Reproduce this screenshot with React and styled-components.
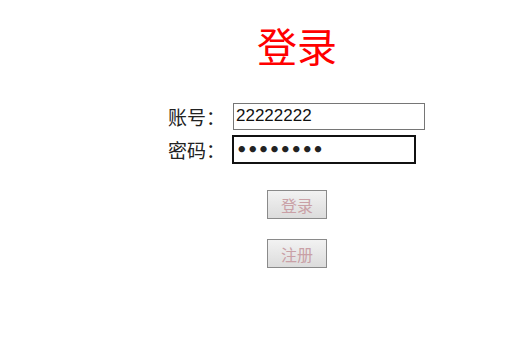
import React from "react";
import styled, { createGlobalStyle } from "styled-components";

const GlobalStyle = createGlobalStyle`
  html, body {
    margin: 0;
    padding: 0;
    background: #ffffff;
  }
  body {
    font-family: "Noto Sans CJK SC", "Liberation Serif", serif;
  }
`;

const Page = styled.div`
  width: 526px;
  height: 352px;
  box-sizing: border-box;
  padding: 18px 0 0 68px;
  display: flex;
  flex-direction: column;
  align-items: center;
`;

const Title = styled.h1`
  margin: 0;
  color: #ff0000;
  font-size: 40px;
  font-weight: 400;
  line-height: 54px;
`;

const Form = styled.form`
  margin-top: 29px;
  display: flex;
  flex-direction: column;
  align-items: center;
`;

const Row = styled.div`
  display: flex;
  align-items: center;
  width: 258px;
  height: 30px;
  margin-bottom: 3px;
`;

const Label = styled.label`
  width: 65px;
  font-size: 19px;
  color: #222;
`;

const Input = styled.input`
  box-sizing: border-box;
  width: ${(p) => p.$w}px;
  height: 27px;
  padding: 0 2px;
  border: 1px solid ${(p) => (p.$focused ? "#111" : "#767676")};
  outline: ${(p) => (p.$focused ? "1px solid #111" : "none")};
  font-family: "Liberation Sans", Arial, sans-serif;
  font-size: 17px;
  color: #111;
  background: #fff;

  &[type="password"] {
    font-family: "DejaVu Sans", sans-serif;
    font-weight: 700;
    font-size: 18px;
    letter-spacing: -0.6px;
    color: #222;
  }
`;

const Buttons = styled.div`
  margin-top: 23px;
  display: flex;
  flex-direction: column;
  align-items: center;
  gap: 20px;
`;

const Button = styled.button`
  box-sizing: border-box;
  width: 60px;
  height: 29px;
  padding: 0;
  border: 1px solid #8a8a8a;
  background: linear-gradient(#f2f2f2, #dcdcdc);
  color: #c9a0a6;
  font-family: "Noto Sans CJK SC", sans-serif;
  font-size: 16px;
`;

export default function App() {
  return (
    <>
      <GlobalStyle />
      <Page>
        <Title>登录</Title>
        <Form onSubmit={(e) => e.preventDefault()}>
          <Row>
            <Label>账号：</Label>
            <Input $w={192} type="text" defaultValue="22222222" />
          </Row>
          <Row>
            <Label>密码：</Label>
            <Input $w={182} $focused type="password" defaultValue="22222222" />
          </Row>
          <Buttons>
            <Button type="button">登录</Button>
            <Button type="button">注册</Button>
          </Buttons>
        </Form>
      </Page>
    </>
  );
}
